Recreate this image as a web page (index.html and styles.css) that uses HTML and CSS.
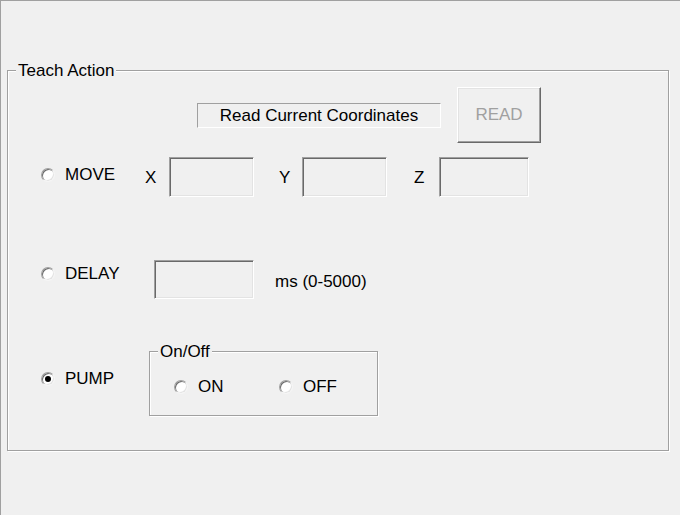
FILE: index.html
```html
<!DOCTYPE html>
<html>
<head>
<meta charset="utf-8">
<link rel="stylesheet" href="styles.css">
</head>
<body>
<div class="window">
  <div class="group main">
    <span class="legend">Teach Action</span>
    <div class="row read-row">
      <div class="static">Read Current Coordinates</div>
      <div class="button disabled">READ</div>
    </div>
    <div class="row move-row">
      <div class="option w-move"><span class="radio"></span><span class="label">MOVE</span></div>
      <span class="axis ax-x">X</span><div class="edit w85"></div>
      <span class="axis ax-y">Y</span><div class="edit w85"></div>
      <span class="axis ax-z">Z</span><div class="edit w90"></div>
    </div>
    <div class="row delay-row">
      <div class="option w-delay up6"><span class="radio"></span><span class="label">DELAY</span></div>
      <div class="edit w100"></div>
      <span class="unit">ms (0-5000)</span>
    </div>
    <div class="row pump-row">
      <div class="option w-pump up5"><span class="radio checked"></span><span class="label">PUMP</span></div>
      <div class="group sub">
        <span class="legend">On/Off</span>
        <div class="sub-row">
          <div class="option w-on"><span class="radio"></span><span class="label">ON</span></div>
          <div class="option"><span class="radio"></span><span class="label">OFF</span></div>
        </div>
      </div>
    </div>
  </div>
</div>
</body>
</html>
```
FILE: styles.css
```css
html, body {
  margin: 0;
  padding: 0;
}
body {
  width: 680px;
  height: 515px;
  overflow: hidden;
  background: #f0f0f0;
  font-family: "Liberation Sans", Arial, sans-serif;
  font-size: 17px;
  line-height: 20px;
  color: #000;
}
.window {
  box-sizing: border-box;
  width: 680px;
  height: 515px;
  border-top: 1px solid #a0a0a0;
  border-left: 1px solid #a0a0a0;
  padding: 69px 0 0 6px;
}
.group {
  position: relative;
  box-sizing: border-box;
  border: 1px solid #a0a0a0;
  box-shadow: 1px 1px 0 #fff, inset 1px 1px 0 #fff;
}
.main {
  width: 662px;
  height: 381px;
  padding: 16px 0 0 0;
}
.legend {
  position: absolute;
  top: -10px;
  left: 8px;
  padding: 0 2px;
  background: #f0f0f0;
  white-space: nowrap;
}
.row {
  display: flex;
  align-items: center;
}
.read-row {
  padding-left: 189px;
  gap: 16px;
}
.static {
  box-sizing: border-box;
  width: 244px;
  height: 25px;
  border: 1px solid;
  border-color: #a0a0a0 #fff #fff #a0a0a0;
  text-align: center;
  line-height: 23px;
  padding-left: 0;
}
.button {
  box-sizing: border-box;
  width: 84px;
  height: 56px;
  border: 1px solid;
  border-color: #fff #696969 #696969 #fff;
  box-shadow: inset -1px -1px 0 #a0a0a0, inset 1px 1px 0 #e3e3e3;
  display: flex;
  align-items: center;
  justify-content: center;
}
.button.disabled {
  color: #a0a0a0;
}
.move-row {
  margin-top: 14px;
  padding-left: 33px;
}
.delay-row {
  margin-top: 63px;
  padding-left: 33px;
}
.pump-row {
  margin-top: 52px;
  padding-left: 33px;
}
.option {
  display: flex;
  align-items: center;
  white-space: nowrap;
}
.w-move { width: 104px; margin-bottom: 4px; }
.w-delay { width: 113px; }
.w-pump { width: 108px; }
.w-on { width: 105px; }
.up6 { margin-bottom: 12px; }
.up5 { margin-bottom: 10px; }
.radio {
  box-sizing: border-box;
  width: 14px;
  height: 14px;
  border-radius: 50%;
  border: 1px solid;
  border-color: #a0a0a0 #f4f4f4 #f4f4f4 #a0a0a0;
  box-shadow: inset 1px 1px 0 #696969, inset -1px -1px 0 #e3e3e3;
  background: #fff;
  margin-right: 10px;
  position: relative;
  flex: none;
}
.radio.checked::after {
  content: "";
  position: absolute;
  left: 3px;
  top: 3px;
  width: 6px;
  height: 6px;
  border-radius: 50%;
  background: #000;
}
.axis {
  display: block;
  margin-top: 2px;
}
.ax-x { width: 24px; }
.ax-y { width: 23px; margin-left: 25px; }
.ax-z { width: 25px; margin-left: 27px; }
.edit {
  box-sizing: border-box;
  height: 40px;
  border: 1px solid;
  border-color: #a0a0a0 #fff #fff #a0a0a0;
  box-shadow: inset 1px 1px 0 #696969, inset -1px -1px 0 #e3e3e3;
  background: #f0f0f0;
}
.w85 { width: 85px; }
.w90 { width: 90px; }
.w100 { width: 100px; height: 39px; }
.unit {
  margin-left: 21px;
  margin-top: 4px;
}
.sub {
  width: 229px;
  height: 65px;
  padding: 25px 0 0 24px;
}
.sub-row {
  display: flex;
  align-items: center;
}
```
